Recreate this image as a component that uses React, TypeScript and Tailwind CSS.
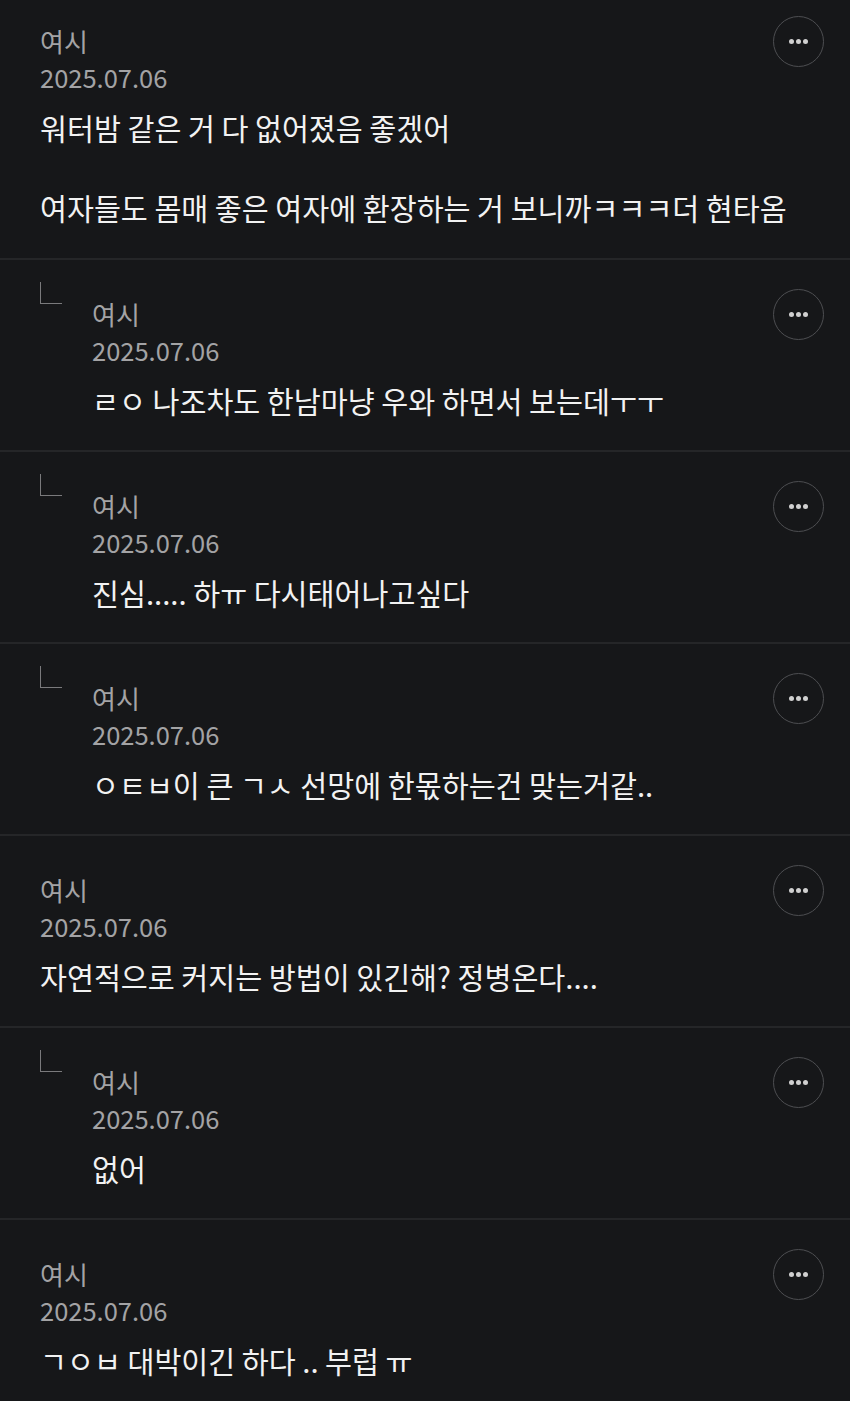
import React from "react";

type Item = { reply: boolean; text: string; first?: boolean };

const items: Item[] = [
  { reply: false, first: true, text: "워터밤 같은 거 다 없어졌음 좋겠어\n\n여자들도 몸매 좋은 여자에 환장하는 거 보니까ㅋㅋㅋ더 현타옴" },
  { reply: true, text: "ㄹㅇ 나조차도 한남마냥 우와 하면서 보는데ㅜㅜ" },
  { reply: true, text: "진심..... 하ㅠ 다시태어나고싶다" },
  { reply: true, text: "ㅇㅌㅂ이 큰 ㄱㅅ 선망에 한몫하는건 맞는거같.." },
  { reply: false, text: "자연적으로 커지는 방법이 있긴해? 정병온다...." },
  { reply: true, text: "없어" },
  { reply: false, text: "ㄱㅇㅂ 대박이긴 하다 .. 부럽 ㅠ" },
];

function MoreButton() {
  return (
    <div className="flex h-[51px] w-[51px] shrink-0 items-center justify-center gap-[2.5px] rounded-full border-[1.5px] border-[#4d4e51]">
      <span className="h-[4.5px] w-[4.5px] rounded-full bg-[#d0d0d0]" />
      <span className="h-[4.5px] w-[4.5px] rounded-full bg-[#d0d0d0]" />
      <span className="h-[4.5px] w-[4.5px] rounded-full bg-[#d0d0d0]" />
    </div>
  );
}

function Comment({ item }: { item: Item }) {
  return (
    <div
      className={
        "flex border-b-2 border-[#252628] pl-[40px] pr-[26px] " +
        (item.first ? "pt-[23px] pb-[31px]" : "pt-[36px] pb-[30px]")
      }
    >
      {item.reply && (
        <div className="mt-[-14px] w-[52px] shrink-0">
          <div className="h-[22px] w-[22px] border-b-[1.5px] border-l-[1.5px] border-[#7a7a7c]" />
        </div>
      )}
      <div className="min-w-0 flex-1">
        <div className="text-[26px] leading-[36px] text-[#a3a3a5]">여시</div>
        <div className="text-[25.5px] leading-[36px] text-[#a3a3a5]">2025.07.06</div>
        <div className="mt-[12px] whitespace-pre text-[29.3px] leading-[40px] text-[#f2f2f2]">{item.text}</div>
      </div>
      <div className="mt-[-7px]">
        <MoreButton />
      </div>
    </div>
  );
}

export default function App() {
  return (
    <div
      className="min-h-[1401px] w-[850px] overflow-hidden bg-[#161719]"
      style={{ fontFamily: '"Noto Sans CJK KR", "Noto Sans", sans-serif' }}
    >
      {items.map((it, i) => (
        <Comment key={i} item={it} />
      ))}
    </div>
  );
}
